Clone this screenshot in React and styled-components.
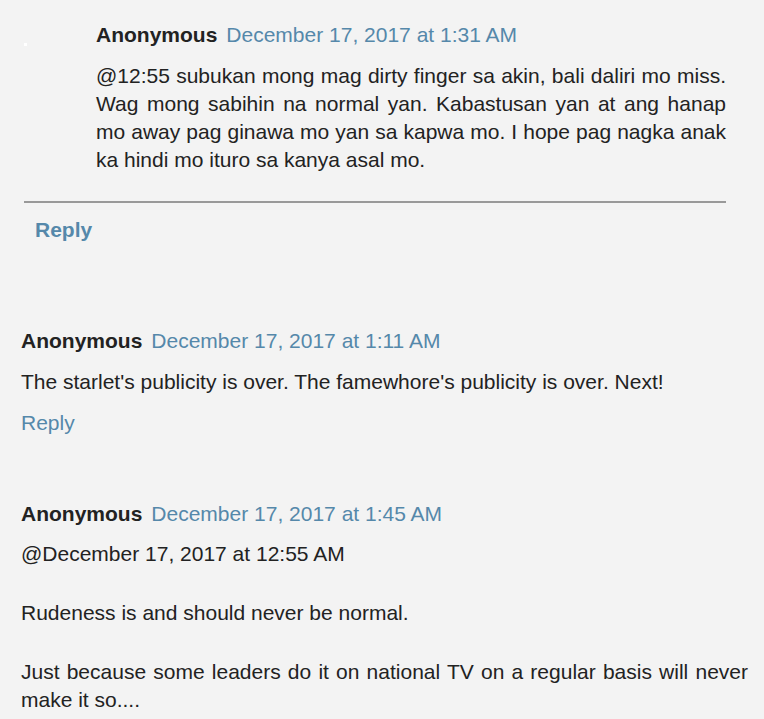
import React from 'react';
import styled, { createGlobalStyle } from 'styled-components';

const GlobalStyle = createGlobalStyle`
  html, body {
    margin: 0;
    padding: 0;
    background: #f3f3f3;
  }
  body {
    font-family: "Liberation Sans", Arial, sans-serif;
    font-size: 21px;
    color: #222;
  }
`

const Page = styled.div`
  width: 764px;
  height: 719px;
  overflow: hidden;
  background: #f3f3f3;
  padding: 21px 16px 0 21px;
  box-sizing: border-box;
`

const Nested = styled.div`
  position: relative;
  margin-left: 3px;
  width: 702px;
`

const Dot = styled.span`
  position: absolute;
  left: 0;
  top: 22px;
  width: 3px;
  height: 3px;
  background: #fff;
`

const Comment = styled.div`
  padding-left: ${p => p.$indent || 0}px;
  margin-top: ${p => p.$top || 0}px;
  margin-bottom: ${p => p.$gap || 0}px;
`

const Header = styled.div`
  line-height: 28px;
  display: flex;
  gap: 9px;
  align-items: baseline;
`

const Author = styled.span`
  font-weight: bold;
  color: #222;
`

const Stamp = styled.a`
  color: #5588aa;
  text-decoration: none;
`

const Body = styled.div`
  margin-top: ${p => p.$top ?? 13}px;
  line-height: 28px;
  text-align: justify;
  color: #222;
`

const Actions = styled.div`
  border-top: 2px solid #999;
  margin-top: 27px;
  padding: 13px 11px 0;
  line-height: 28px;
`

const ReplyLink = styled.a`
  color: #5588aa;
  text-decoration: none;
  font-weight: ${p => (p.$bold ? 'bold' : 'normal')};
`

const ReplyRow = styled.div`
  margin-top: 13px;
  line-height: 28px;
`

const Para = styled.p`
  margin: 0 0 31px;
  &:last-child {
    margin-bottom: 0;
  }
`

export default function App() {
  return (
    <Page>
      <GlobalStyle />
      <Nested>
        <Dot />
        <Comment $indent={72}>
          <Header>
            <Author>Anonymous</Author>
            <Stamp href="#">December 17, 2017 at 1:31 AM</Stamp>
          </Header>
          <Body>
            @12:55 subukan mong mag dirty finger sa akin, bali daliri mo miss. Wag mong sabihin na normal yan. Kabastusan yan at ang hanap mo away pag ginawa mo yan sa kapwa mo. I hope pag nagka anak ka hindi mo ituro sa kanya asal mo.
          </Body>
        </Comment>
        <Actions>
          <ReplyLink href="#" $bold>Reply</ReplyLink>
        </Actions>
      </Nested>

      <Comment $top={83} $gap={63}>
        <Header>
          <Author>Anonymous</Author>
          <Stamp href="#">December 17, 2017 at 1:11 AM</Stamp>
        </Header>
        <Body>The starlet's publicity is over. The famewhore's publicity is over. Next!</Body>
        <ReplyRow>
          <ReplyLink href="#">Reply</ReplyLink>
        </ReplyRow>
      </Comment>

      <Comment>
        <Header>
          <Author>Anonymous</Author>
          <Stamp href="#">December 17, 2017 at 1:45 AM</Stamp>
        </Header>
        <Body $top={12}>
          <Para>@December 17, 2017 at 12:55 AM</Para>
          <Para>Rudeness is and should never be normal.</Para>
          <Para>Just because some leaders do it on national TV on a regular basis will never make it so....</Para>
        </Body>
      </Comment>
    </Page>
  );
}
